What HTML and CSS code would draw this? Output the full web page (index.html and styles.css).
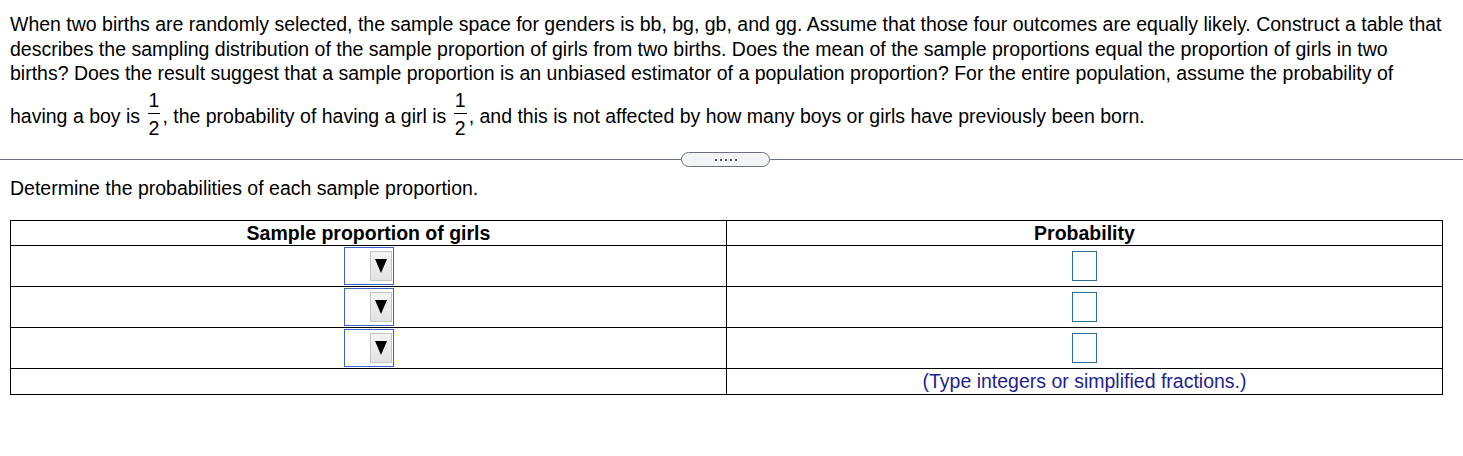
FILE: index.html
```html
<!DOCTYPE html>
<html>
<head>
<meta charset="utf-8">
<link rel="stylesheet" href="styles.css">
</head>
<body>
<div class="question">
  <p class="stem">When two births are randomly selected, the sample space for genders is bb, bg, gb, and gg. Assume that those four outcomes are equally likely. Construct a table that describes the sampling distribution of the sample proportion of girls from two births. Does the mean of the sample proportions equal the proportion of girls in two births? Does the result suggest that a sample proportion is an unbiased estimator of a population proportion? For the entire population, assume the probability of having a boy is <span class="frac"><span class="num">1</span><span class="den">2</span></span>, the probability of having a girl is <span class="frac"><span class="num">1</span><span class="den">2</span></span>, and this is not affected by how many boys or girls have previously been born.</p>
</div>
<div class="divider">
  <div class="rule rule-left"></div>
  <div class="pill"><span class="dot"></span><span class="dot"></span><span class="dot"></span><span class="dot"></span><span class="dot"></span></div>
  <div class="rule rule-right"></div>
</div>
<div class="part">
  <p class="prompt">Determine the probabilities of each sample proportion.</p>
  <table class="answer-table">
    <thead>
      <tr><th>Sample proportion of girls</th><th>Probability</th></tr>
    </thead>
    <tbody>
      <tr class="row"><td><span class="select"><span class="select-btn"><svg width="12" height="14" viewBox="0 0 12 14"><polygon points="0,0 12,0 6,14" fill="#000"/></svg></span></span></td><td><span class="input"></span></td></tr>
      <tr class="row"><td><span class="select"><span class="select-btn"><svg width="12" height="14" viewBox="0 0 12 14"><polygon points="0,0 12,0 6,14" fill="#000"/></svg></span></span></td><td><span class="input"></span></td></tr>
      <tr class="row"><td><span class="select"><span class="select-btn"><svg width="12" height="14" viewBox="0 0 12 14"><polygon points="0,0 12,0 6,14" fill="#000"/></svg></span></span></td><td><span class="input"></span></td></tr>
      <tr class="foot"><td></td><td class="hint">(Type integers or simplified fractions.)</td></tr>
    </tbody>
  </table>
</div>
</body>
</html>
```
FILE: styles.css
```css
html, body {
  margin: 0;
  padding: 0;
  background: #fff;
}
body {
  font-family: "Liberation Sans", Arial, sans-serif;
  color: #000;
  font-size: 19.5px;
}
.question {
  padding: 12px 10px 0 10px;
}
.stem {
  margin: 0;
  width: 1440px;
  line-height: 24.5px;
}
.frac {
  display: inline-block;
  vertical-align: -12.5px;
  text-align: center;
  margin: 3px 2px 0 2px;
}
.num, .den {
  display: block;
  line-height: 22px;
  padding: 0 1px;
}
.num {
  border-bottom: 1px solid #000;
  padding-bottom: 2px;
}
.den {
  padding-top: 3px;
}
.divider {
  display: flex;
  align-items: center;
  margin-top: 13px;
  height: 16px;
}
.rule {
  height: 1px;
  background: #6b717c;
}
.rule-left {
  width: 681px;
}
.rule-right {
  flex: 1;
}
.pill {
  width: 87px;
  height: 13px;
  border: 1px solid #6b717c;
  border-radius: 8px;
  background: #f3f4f6;
  display: flex;
  align-items: center;
  justify-content: center;
  gap: 3px;
}
.dot {
  width: 2px;
  height: 2px;
  background: #4b5260;
}
.part {
  padding: 0 10px;
}
.prompt {
  margin: 9px 0 0 0;
  line-height: 22px;
}
.answer-table {
  margin-top: 21px;
  width: 1433px;
  border-collapse: collapse;
}
.answer-table th,
.answer-table td {
  border: 1px solid #000;
  padding: 0;
  text-align: center;
  width: 50%;
}
.answer-table th {
  font-size: 19.5px;
  font-weight: bold;
  height: 24px;
  line-height: 20px;
}
.row td {
  height: 40px;
  vertical-align: middle;
}
.foot td {
  height: 25px;
}
.select {
  display: inline-flex;
  justify-content: flex-end;
  align-items: center;
  box-sizing: border-box;
  width: 50px;
  height: 38px;
  border: 1px solid #3d63c9;
  padding-right: 1px;
  vertical-align: middle;
}
.select-btn {
  box-sizing: border-box;
  width: 22px;
  height: 30px;
  background: linear-gradient(#f4f4f4, #e2e2e2);
  border: 1px solid #c4c4c4;
  display: flex;
  align-items: center;
  justify-content: center;
}
.select-btn svg {
  display: block;
}
.input {
  display: inline-block;
  box-sizing: border-box;
  width: 25px;
  height: 30px;
  border: 1px solid #2b6d96;
  vertical-align: middle;
}
.hint {
  color: #1f1f8f;
  line-height: 22px;
}
```
